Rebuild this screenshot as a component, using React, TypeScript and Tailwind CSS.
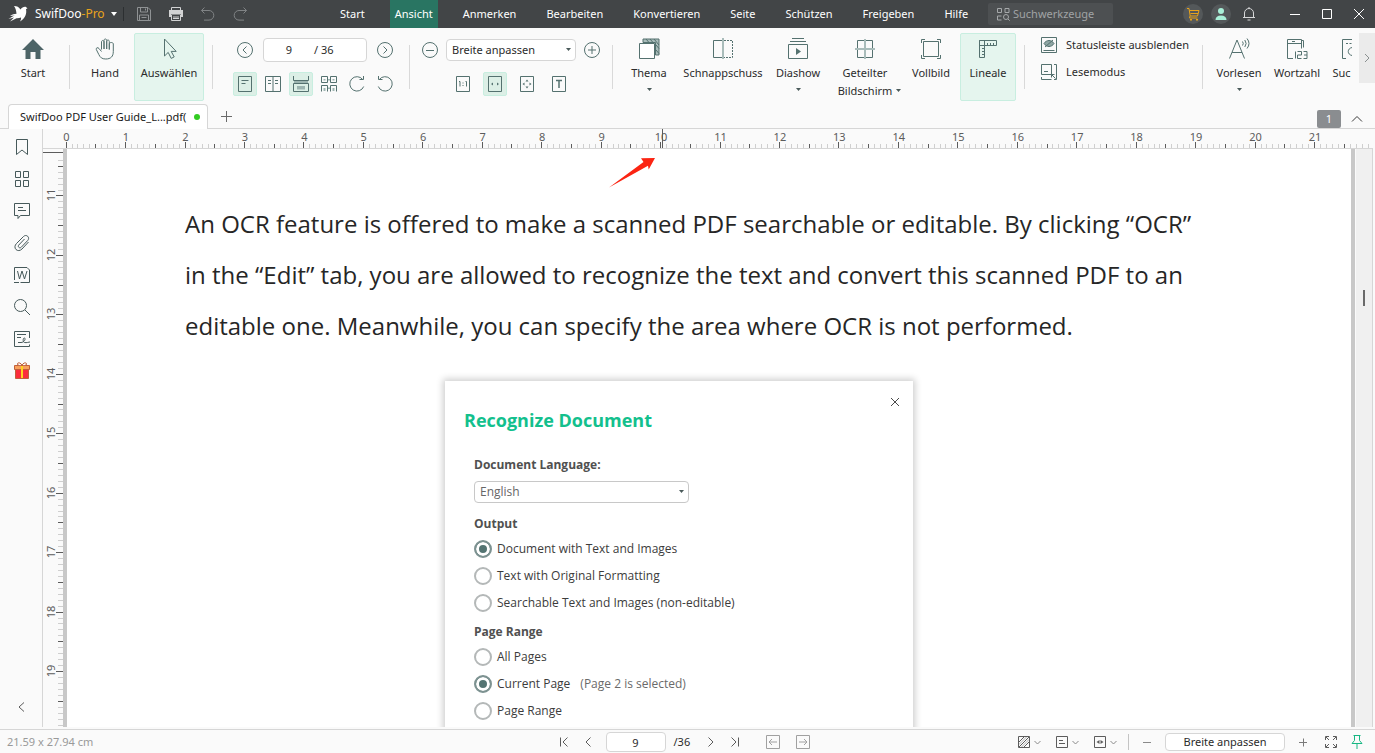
import { useState, type ReactNode } from "react";

const MENU = [
  "Start",
  "Ansicht",
  "Anmerken",
  "Bearbeiten",
  "Konvertieren",
  "Seite",
  "Schützen",
  "Freigeben",
  "Hilfe",
];

const INK = "#54716f";
const CM = 59.45;

type IconProps = {
  size?: number;
  color?: string;
  children: ReactNode;
};

function Icon({ size = 24, color = INK, children }: IconProps) {
  return (
    <svg
      width={size}
      height={size}
      viewBox={`0 0 ${size} ${size}`}
      fill="none"
      stroke={color}
      className="block shrink-0"
      aria-hidden="true"
    >
      {children}
    </svg>
  );
}

function Caret() {
  return (
    <svg width="5" height="3" viewBox="0 0 5 3" className="block" aria-hidden="true">
      <path d="M0 0h5L2.5 3z" fill="#4a5a5a" />
    </svg>
  );
}

type RibbonButtonProps = {
  label: string;
  width: string;
  icon: ReactNode;
  active?: boolean;
  caret?: boolean;
};

function RibbonButton({ label, width, icon, active, caret }: RibbonButtonProps) {
  return (
    <button
      className={`flex h-[68px] shrink-0 flex-col items-center rounded-xs border pt-[3px] ${width} ${
        active ? "border-[#c8eee0] bg-[#e5f5ee]" : "border-transparent"
      }`}
    >
      <span className="flex h-6 items-center">{icon}</span>
      <span className="mt-[3px] leading-[18px] whitespace-nowrap">{label}</span>
      {caret && (
        <span className="mt-1.5">
          <Caret />
        </span>
      )}
    </button>
  );
}

function SmallButton({ label, active, children }: { label: string; active?: boolean; children: ReactNode }) {
  return (
    <button
      aria-label={label}
      className={`flex size-6 shrink-0 items-center justify-center rounded-xs border ${
        active ? "border-[#c8eee0] bg-[#dcefe6]" : "border-transparent"
      }`}
    >
      {children}
    </button>
  );
}

function Divider() {
  return <span className="mt-3 h-11 w-px shrink-0 bg-[#d9d9d9]" />;
}

function TitleBar() {
  return (
    <header className="flex h-7 shrink-0 items-center bg-[#424547] text-white">
      <div className="flex w-[335px] shrink-0 items-center pl-2">
        <svg width="20" height="18" viewBox="0 0 20 18" className="shrink-0" aria-hidden="true">
          <path
            d="M6 1c3 0 5 1 6.500 3.500 1.500-2 3.500-3 5.500-2.500l1.500 1.500-1.500.5c1 5-1 9.500-6 12.500 1-1.800 1.200-3 1-4-1.500.6-3 .8-4.500.7l-6.500 3.300 4-4-5.500 1.500c2-1.500 4.500-3 6.500-3.500l-5 .5c2-1.500 4.500-2.200 6.500-2.200-.2-3-.8-5.300-2.500-7.800z"
            fill="#fff"
          />
        </svg>
        <button className="ml-[7px] flex w-[82px] items-center justify-between text-xs whitespace-nowrap">
          <span>
            SwifDoo<span className="text-[#e8a31b]">-Pro</span>
          </span>
          <svg width="6" height="4" viewBox="0 0 6 4" aria-hidden="true">
            <path d="M0 0h6L3 4z" fill="#fff" />
          </svg>
        </button>
        <span className="ml-1.5 h-3.5 w-px bg-[#2c2f31]" />
        <div className="ml-2 flex gap-2">
          <button aria-label="Speichern" className="flex size-6 items-center justify-center">
            <Icon size={16} color="#8f9294">
              <path d="M1.500 1.500h10.500l2.500 2.500v10.500h-13zM4.500 1.500v4.500h7v-4.500M9.500 2.500v2M3.500 14.500v-5.500h9v5.500M5.500 11.500h5" />
            </Icon>
          </button>
          <button aria-label="Drucken" className="flex size-6 items-center justify-center">
            <Icon size={16} color="#d2d3d4">
              <path d="M3.500 4v-2.500h9v2.500" />
              <path d="M1 4h14v7h-2v-2.500h-10v2.500h-2z" fill="#d2d3d4" stroke="none" />
              <path d="M3.500 9v5.500h9v-5.500M5 11h6M5 12.500h6" />
            </Icon>
          </button>
          <button aria-label="Rückgängig" className="flex size-6 items-center justify-center">
            <Icon size={16} color="#808385">
              <path d="M4.500 1.500l-3 3 3 3M1.500 4.500h7.500a4.800 4.800 0 0 1 0 9.600h-5" />
            </Icon>
          </button>
          <button aria-label="Wiederholen" className="flex size-6 items-center justify-center">
            <Icon size={16} color="#808385">
              <path d="M11.500 1.500l3 3-3 3M14.500 4.500h-7.500a4.800 4.800 0 0 0 0 9.600h5" />
            </Icon>
          </button>
        </div>
      </div>
      <nav className="flex h-full gap-5 text-[11px]">
        {MENU.map((item) => (
          <button
            key={item}
            className={`h-full px-[5px] whitespace-nowrap ${item === "Ansicht" ? "bg-[#297562]" : ""}`}
          >
            {item}
          </button>
        ))}
      </nav>
      <label className="ml-auto flex h-[22px] w-[125px] shrink-0 items-center rounded-xs bg-[#4d5052] pl-[9px]">
        <Icon size={13} color="#a5a8aa">
          <path d="M.5 .5h4v4h-4zM8 .5h4v4h-4zM4.500 8h-4v4h4" />
          <circle cx="9" cy="9" r="2.500" />
          <path d="M11 11l1.700 1.700" />
        </Icon>
        <input
          aria-label="Suche"
          placeholder="Suchwerkzeuge"
          className="ml-[3px] w-full min-w-0 text-[11px] outline-none placeholder:text-[#a0a3a5]"
        />
      </label>
      <div className="ml-[70px] flex shrink-0 gap-2">
        <button aria-label="Warenkorb" className="flex size-5 items-center justify-center rounded-full bg-[#54585a]">
          <Icon size={14} color="#e8a31b">
            <path d="M1 1.500h2l1.200 7.500h7.300l1.500-5.500h-9.500M4.500 6.500h7.500M4 9l-.5 2h8" />
            <path d="M4 12h2v1.500h-2zM10 12h2v1.500h-2z" fill="#e8a31b" stroke="none" />
          </Icon>
        </button>
        <button aria-label="Konto" className="flex size-5 items-center justify-center rounded-full bg-[#54585a]">
          <Icon size={12}>
            <circle cx="6" cy="3" r="3" fill="#a9f0d8" stroke="none" />
            <path d="M.5 12c0-3 2-4.500 5.500-4.500s5.500 1.500 5.500 4.500z" fill="#a9f0d8" stroke="none" />
          </Icon>
        </button>
        <button aria-label="Benachrichtigungen" className="flex size-5 items-center justify-center">
          <Icon size={14} color="#d6d7d8">
            <path d="M1 10.500h12M2.500 10.500v-4.500a4.500 4.500 0 0 1 9 0v4.500M7 1.500v-1.500M5.500 13h3" />
          </Icon>
        </button>
      </div>
      <div className="ml-[20px] flex shrink-0">
        <button aria-label="Minimieren" className="flex h-7 w-8 items-center justify-center">
          <Icon size={12} color="#fff">
            <path d="M1 6.500h10" />
          </Icon>
        </button>
        <button aria-label="Maximieren" className="flex h-7 w-8 items-center justify-center">
          <Icon size={12} color="#fff">
            <path d="M1.500 1.500h9v9h-9z" />
          </Icon>
        </button>
        <button aria-label="Schließen" className="flex h-7 w-8 items-center justify-center">
          <Icon size={12} color="#fff">
            <path d="M1 1l10 10M11 1l-10 10" />
          </Icon>
        </button>
      </div>
    </header>
  );
}

function PageNav() {
  return (
    <div className="ml-5 flex w-[164px] shrink-0 flex-col gap-2.5 pt-[5px]">
      <div className="flex items-center justify-between">
        <SmallButton label="Vorherige Seite">
          <Icon size={18}>
            <circle cx="9" cy="9" r="7.500" />
            <path d="M10.500 5.500l-3.500 3.500 3.500 3.500" />
          </Icon>
        </SmallButton>
        <label className="flex h-6 w-[104px] items-center rounded border border-[#d6d6d6] bg-white">
          <input
            aria-label="Seite"
            defaultValue="9"
            className="w-[50px] text-center outline-none"
          />
          <span className="whitespace-pre">/ 36</span>
        </label>
        <SmallButton label="Nächste Seite">
          <Icon size={18}>
            <circle cx="9" cy="9" r="7.500" />
            <path d="M7.500 5.500l3.500 3.500-3.500 3.500" />
          </Icon>
        </SmallButton>
      </div>
      <div className="flex gap-1">
        <SmallButton label="Einzelseite" active>
          <Icon size={16}>
            <path d="M1.500 .5h13v15h-13zM4.500 4.500h7M4.500 7.500h4" />
          </Icon>
        </SmallButton>
        <SmallButton label="Doppelseite">
          <Icon size={16}>
            <path d="M.5 .5h15v15h-15zM8 .5v15" />
            <path d="M3 4.500h3M3 7.500h3M10 4.500h3M10 7.500h3" />
          </Icon>
        </SmallButton>
        <SmallButton label="Fortlaufend" active>
          <Icon size={16}>
            <path d="M.5 0v4.500h15v-4.500M.5 15.500v-8h15v8z" />
            <path d="M1 5h14v2h-14zM4 10h8v3.500h-8z" fill="#9db5b1" stroke="none" />
          </Icon>
        </SmallButton>
        <SmallButton label="Doppelseite fortlaufend">
          <Icon size={18}>
            <path d="M1.500 1.500h6v6h-6zM10.500 1.500h6v6h-6zM1.500 16.500v-6h6v6M10.500 16.500v-6h6v6" />
            <path d="M8 4h2v1.500h-2zM8 12.500h2v1.500h-2zM3.500 4h2v1.500h-2zM12.500 4h2v1.500h-2zM3.500 13h2v3h-2zM12.500 13h2v3h-2z" fill="#9db5b1" stroke="none" />
          </Icon>
        </SmallButton>
        <SmallButton label="Im Uhrzeigersinn drehen">
          <Icon size={18}>
            <path d="M14.700 4.500a7.200 7.200 0 1 0 1 7M11.500 4.500h4v-3.500" />
          </Icon>
        </SmallButton>
        <SmallButton label="Gegen Uhrzeigersinn drehen">
          <Icon size={18}>
            <path d="M3.300 4.500a7.200 7.200 0 1 1-1 7M6.500 4.500h-4v-3.500" />
          </Icon>
        </SmallButton>
      </div>
    </div>
  );
}

function ZoomTools() {
  return (
    <div className="ml-2 flex w-[186px] shrink-0 flex-col gap-2.5 pt-[5px]">
      <div className="flex items-center gap-1">
        <SmallButton label="Verkleinern">
          <Icon size={18}>
            <circle cx="9" cy="9" r="7.500" />
            <path d="M5 9.500h8" />
          </Icon>
        </SmallButton>
        <div className="relative">
          <select
            aria-label="Zoom"
            className="block h-[22px] w-[130px] appearance-none rounded border border-[#d6d6d6] bg-white pl-[5px] outline-none"
          >
            <option>Breite anpassen</option>
          </select>
          <span className="pointer-events-none absolute top-[9px] right-[5px]">
            <Caret />
          </span>
        </div>
        <SmallButton label="Vergrößern">
          <Icon size={18}>
            <circle cx="9" cy="9" r="7.500" />
            <path d="M5 9h8M9 5v8" />
          </Icon>
        </SmallButton>
      </div>
      <div className="flex justify-center gap-2">
        <SmallButton label="Originalgröße">
          <Icon size={16}>
            <path d="M1.500 .5h13v15h-13z" />
            <path d="M4 5.500h1v5M10.500 5.500h1v5M8 6.500v1M8 9v1" />
          </Icon>
        </SmallButton>
        <SmallButton label="Breite anpassen" active>
          <Icon size={16}>
            <path d="M1.500 .5h13v15h-13z" />
            <path d="M6 6.500v3l-2-1.500zM10 6.500v3l2-1.500z" fill={INK} stroke="none" />
          </Icon>
        </SmallButton>
        <SmallButton label="Seite anpassen">
          <Icon size={16}>
            <path d="M1.500 .5h13v15h-13z" />
            <path d="M5.500 6.500v3l-2-1.500zM10.500 6.500v3l2-1.500zM6.500 5.500h3l-1.500-2zM6.500 10.500h3l-1.500 2z" fill={INK} stroke="none" />
          </Icon>
        </SmallButton>
        <SmallButton label="Text anpassen">
          <Icon size={16}>
            <path d="M1.500 .5h13v15h-13z" />
            <path d="M5 4.500h6M8 4.500v7.500" strokeWidth="1.500" />
          </Icon>
        </SmallButton>
      </div>
    </div>
  );
}

function Ribbon() {
  return (
    <section className="flex h-[76px] shrink-0 overflow-hidden pt-[5px] pl-2 text-[11px] text-[#2b2b2b]">
      <RibbonButton
        label="Start"
        width="w-[50px]"
        icon={
          <Icon>
            <path d="M12 2l11 11h-3.500v9h-5v-7h-5v7h-5v-9h-3.500z" fill="#4d6467" stroke="none" />
          </Icon>
        }
      />
      <span className="ml-[11px] flex"><Divider /></span>
      <div className="ml-2.5 flex gap-1">
        <RibbonButton
          label="Hand"
          width="w-[50px]"
          icon={
            <Icon>
              <path d="M8.500 12.500v-7.500c0-2 2.500-2 2.500 0v7-8.500c0-2 2.700-2 2.700 0v8.500-7.500c0-2 2.600-2 2.600 0v8-5.500c0-2 4-2 4 0v7.500c0 5-2.500 7.500-7.500 7.500-4 0-5.500-1.500-7-4.500l-2.500-5c-.5-1.800 1.500-2.500 2.700-1l2.500 3" />
            </Icon>
          }
        />
        <RibbonButton
          label="Auswählen"
          width="w-[70px]"
          active
          icon={
            <Icon>
              <path d="M7.500 2v17l3.700-3.600 3 6 3-1.500-3-5.500h5z" />
            </Icon>
          }
        />
      </div>
      <span className="ml-2 flex"><Divider /></span>
      <PageNav />
      <span className="ml-3 flex"><Divider /></span>
      <ZoomTools />
      <span className="ml-2 flex"><Divider /></span>
      <div className="ml-[11px] flex">
        <RibbonButton
          label="Thema"
          width="w-[50px]"
          caret
          icon={
            <Icon>
              <path d="M6 2h16v16h-3.500v-12.500h-12.500z" fill="#a9bcba" />
              <path d="M9 2l3 3.500M13 2l3 3.500M17 2l5 6M19 8l3 3.500M19 13l3 3.500" />
              <path d="M2.500 6.500h15v15h-15z" fill="#fff" />
            </Icon>
          }
        />
        <RibbonButton
          label="Schnappschuss"
          width="w-[98px]"
          icon={
            <Icon>
              <path d="M12 3.500h-9.500v17h9.500" />
              <path d="M13 3.500h8.500v17h-8.500" strokeDasharray="2 1" />
              <path d="M11 1h2v21h-2z" fill="#a9bcba" stroke="none" />
            </Icon>
          }
        />
        <RibbonButton
          label="Diashow"
          width="w-[52px]"
          caret
          icon={
            <Icon>
              <path d="M6 1.500h12M4 4.500h16M2.500 7.500h19v14h-19z" />
              <path d="M10 11v7l5-3.500z" fill={INK} stroke="none" />
            </Icon>
          }
        />
        <button className="ml-2 flex h-[68px] w-[66px] shrink-0 flex-col items-center pt-1">
          <Icon>
            <path d="M4.500 3.500h15v17h-15z" />
            <path d="M11 2h2v20h-2zM2 11h20v2h-20z" fill="#a9bcba" stroke="none" />
          </Icon>
          <span className="mt-[3px] leading-[18px]">Geteilter</span>
          <span className="relative leading-[18px]">
            Bildschirm
            <span className="absolute top-[7px] left-full ml-1">
              <Caret />
            </span>
          </span>
        </button>
        <RibbonButton
          label="Vollbild"
          width="ml-2 w-[50px]"
          icon={
            <Icon>
              <path d="M4.500 4.500h15v15h-15zM2.500 6v-3.500h3.500M18 2.500h3.500v3.500M21.500 18v3.500h-3.500M6 21.500h-3.500v-3.500" />
            </Icon>
          }
        />
        <RibbonButton
          label="Lineale"
          width="ml-1 w-14"
          active
          icon={
            <Icon>
              <path d="M3.500 3.500h17v5h-17zM3.500 3.500h5v17h-5z" />
              <path d="M11.500 8v-2M14.500 8v-2M17.500 8v-2M8 11.500h-2M8 14.500h-2M8 17.500h-2" />
            </Icon>
          }
        />
      </div>
      <span className="ml-2 flex"><Divider /></span>
      <div className="ml-3 flex w-[154px] shrink-0 flex-col gap-[3px]">
        <button className="flex h-6 items-center gap-[5px] whitespace-nowrap">
          <Icon>
            <path d="M4.500 4.500h15v15h-15zM6.500 17.500h11" />
            <path d="M7 10.500c2.500-4 7.500-4 10 0-2.500 4-7.500 4-10 0z" fill="#8fa6a4" />
            <path d="M8 14l8-7" />
          </Icon>
          Statusleiste ausblenden
        </button>
        <button className="flex h-6 items-center gap-[5px] whitespace-nowrap">
          <Icon>
            <path d="M4.500 4.500h10v10h-10zM7 11.500h4M4.500 17v2.500h10M17 4.500h2.500v15h-2.500M18.500 18.500l-4-4M14.500 17.500v-3h3" />
          </Icon>
          Lesemodus
        </button>
      </div>
      <span className="ml-[11px] flex"><Divider /></span>
      <div className="ml-[9px] flex min-w-0 flex-1 overflow-hidden">
        <RibbonButton
          label="Vorlesen"
          width="w-[54px]"
          caret
          icon={
            <Icon>
              <path d="M2.500 21.500l7.500-18.500 7.500 18.500M5 15.500h10" />
              <path d="M15.500 4.500q1.500 2 0 4M17.800 3q2.700 3.500 0 7M20 1.500q4 5 0 10" />
            </Icon>
          }
        />
        <RibbonButton
          label="Wortzahl"
          width="w-[62px]"
          icon={
            <Icon>
              <path d="M8 21.500h-5.500v-19h14v9M2.500 6.500h14M16.500 3.500h2v7M7 4.500h3" />
              <path d="M10.500 14.500v7M12.500 14.500h4v3.500h-4v3.500h4M18.500 14.500h3.500v7h-3.500M19 18h3" />
            </Icon>
          }
        />
        <button aria-label="Suchen" className="ml-1 flex h-[68px] w-[19px] shrink-0 flex-col pt-1">
          <span className="ml-2.5 block w-[10px] overflow-hidden">
            <Icon>
              <path d="M4 21.500h-3.500v-19h20" />
              <path d="M4 6.500h2M7.500 6.500h2" />
              <path d="M10 10.500c-5 1-5 7 0 8" />
            </Icon>
          </span>
          <span className="mt-[3px] leading-[18px]">Suc</span>
        </button>
      </div>
      <button aria-label="Mehr" className="ml-auto flex h-[50px] w-4 shrink-0 items-center justify-center bg-[#ebebeb]">
        <Icon size={10} color="#8a9090">
          <path d="M3 1l4 4-4 4" />
        </Icon>
      </button>
    </section>
  );
}

function TabStrip() {
  return (
    <div className="flex h-[25px] shrink-0 items-end border-b border-[#d6d6d6] pl-2 text-[11px]">
      <button className="-mb-px flex h-[25px] w-[200px] items-center justify-between rounded-t border border-b-0 border-[#d6d6d6] bg-white pr-[7px] pl-[11px] whitespace-nowrap text-[#1a1a1a]">
        SwifDoo PDF User Guide_L...pdf(
        <span className="size-1.5 shrink-0 rounded-full bg-[#33cc22]" />
      </button>
      <button aria-label="Neuer Tab" className="flex h-6 w-9 items-center justify-center">
        <Icon size={12} color="#6a6a6a">
          <path d="M6.500 1v11M1 6.500h11" />
        </Icon>
      </button>
      <button className="mr-1 ml-auto h-[18px] w-6 rounded-xs bg-[#8a8d90] leading-4 text-white">1</button>
      <button aria-label="Menüband einklappen" className="mr-1.5 flex h-[18px] w-6 items-center justify-center">
        <Icon size={12} color="#3a3a3a">
          <path d="M1 8.500l5-5 5 5" />
        </Icon>
      </button>
    </div>
  );
}

const SIDE_ICONS = [
  {
    label: "Lesezeichen",
    icon: <path d="M3.500 1.500h11v15l-5.500-4.500-5.500 4.500z" />,
  },
  {
    label: "Miniaturansichten",
    icon: <path d="M2.500 1.500h5v6h-5zM10.500 1.500h5v6h-5zM2.500 10.500h5v6h-5zM10.500 10.500h5v6h-5z" />,
  },
  {
    label: "Kommentare",
    icon: <path d="M1.500 1.500h15v12h-9l-2.500 3v-3h-3.500zM5 5.500h5M5 8.500h8" />,
  },
  {
    label: "Anhänge",
    icon: (
      <path d="M15.500 8l-6.500 7c-2 2-4.500 2-6 .5s-1.500-4 .5-6l7-7c1.300-1.300 3-1.300 4.200-.2s1.200 3 0 4.200l-6.500 6.800c-.7.700-1.700.7-2.400 0s-.6-1.600 0-2.300l5.700-6" />
    ),
  },
  {
    label: "Word",
    icon: <path d="M1.500 14v-12.500h12.500l2.500 2.500v12.500h-9M1 16.500h5M4.500 5l2 8 2.500-8 2.500 8 2.500-8" />,
  },
  {
    label: "Suchen",
    icon: (
      <>
        <circle cx="7.500" cy="7.500" r="6" />
        <path d="M12 12l5 5" />
      </>
    ),
  },
  {
    label: "Signaturen",
    icon: (
      <path d="M16.500 8v-6.500h-15v15h15v-2M4 4.500h9M4 7.500h4M8 12.500c3.500 0 5-4 3.500-4.500s-2 4 0 4.500 4.500-.5 5.500-.5M5 12.500h3" />
    ),
  },
];

function Sidebar() {
  return (
    <aside className="flex w-[43px] shrink-0 flex-col items-center border-r border-[#d6d6d6] pt-0.5 pl-0.5">
      {SIDE_ICONS.map(({ label, icon }) => (
        <button key={label} aria-label={label} className="flex size-8 items-center justify-center">
          <Icon size={18} color="#46595a">
            {icon}
          </Icon>
        </button>
      ))}
      <button aria-label="Geschenk" className="flex size-8 items-center justify-center">
        <Icon size={18} color="#c0603a">
          <path d="M2.500 7h13v9.500h-13z" fill="#fb2c3c" />
          <path d="M1.500 3.500h15v4h-15z" fill="#f8a05c" />
          <path d="M9 3.500c-1-3-4.500-3.500-4.500-1.500s3 1.500 4.500 1.500 4.500.5 4.500-1.500-3.500-1.500-4.500 1.500z" fill="#fff" />
          <path d="M8 4h2v12h-2z" fill="#ffd21f" stroke="none" />
        </Icon>
      </button>
      <button aria-label="Leiste einklappen" className="mt-auto mb-2 flex size-6 items-center justify-center">
        <Icon size={12} color="#5a5a5a">
          <path d="M8 1.500l-5 4.500 5 4.500" />
        </Icon>
      </button>
    </aside>
  );
}

function HorizontalRuler() {
  const ticks = Array.from({ length: 220 }, (_, i) => i);
  return (
    <svg className="block h-[19px] w-full" aria-hidden="true">
      {ticks.map((i) => {
        const x = Math.round(2.6 + (i * CM) / 10) + 0.5;
        const dark = i % 5 === 0;
        return (
          <line key={i} x1={x} x2={x} y1={i % 10 === 0 ? 13 : 15} y2="19" stroke={dark ? "#5c5c5c" : "#cfcfcf"} />
        );
      })}
      {ticks
        .filter((i) => i % 10 === 0)
        .map((i) => (
          <text key={i} x={3.5 + (i * CM) / 10} y="12" textAnchor="middle" fontSize="11" fill="#5c5c5c">
            {i / 10}
          </text>
        ))}
      <line x1="599.500" x2="599.500" y1="0" y2="19" stroke="#5c5c5c" />
    </svg>
  );
}

function VerticalRuler() {
  // the first centimetre in view is 10.3
  const ticks = Array.from({ length: 96 }, (_, i) => i + 104);
  const top = (i: number) => Math.round((i * CM) / 10 - 607.5);
  return (
    <svg className="block h-full w-5 shrink-0" aria-hidden="true">
      <line x1="0" x2="20" y1="3.500" y2="3.500" stroke="#5c5c5c" />
      {ticks.map((i) => {
        const y = top(i) + 0.5;
        const dark = i % 5 === 0;
        return <line key={i} y1={y} y2={y} x1={i % 10 === 0 ? 13 : 15} x2="20" stroke={dark ? "#5c5c5c" : "#cfcfcf"} />;
      })}
      {ticks
        .filter((i) => i % 10 === 0)
        .map((i) => (
          <text
            key={i}
            transform={`translate(12 ${top(i)}) rotate(-90)`}
            textAnchor="middle"
            fontSize="11"
            fill="#5c5c5c"
          >
            {i / 10}
          </text>
        ))}
    </svg>
  );
}

type RadioRowProps = {
  name: string;
  label: string;
  note?: string;
  checked: boolean;
  onSelect: () => void;
};

function RadioRow({ name, label, note, checked, onSelect }: RadioRowProps) {
  return (
    <label className="flex h-[27px] items-center gap-[5px] text-[#3c3c3c]">
      <input
        type="radio"
        name={name}
        checked={checked}
        onChange={onSelect}
        className="size-[18px] appearance-none rounded-full border-2 border-[#b4b8b8] bg-white checked:border-[#7d9291] checked:bg-[#547472] checked:shadow-[inset_0_0_0_3px_#fff]"
      />
      {label}
      {note && <span className="ml-[5px] text-[#6a6a6a]">{note}</span>}
    </label>
  );
}

const OUTPUTS = [
  "Document with Text and Images",
  "Text with Original Formatting",
  "Searchable Text and Images (non-editable)",
];
const RANGES = ["All Pages", "Current Page", "Page Range"];

function RecognizeDialog() {
  const [output, setOutput] = useState(OUTPUTS[0]);
  const [range, setRange] = useState(RANGES[1]);

  return (
    <div className="relative mt-[30px] ml-[378px] h-[420px] w-[468px] bg-white px-[29px] pt-[25px] text-xs shadow-[0_0_7px_2px_rgba(0,0,0,0.2)]">
      <button aria-label="Close" className="absolute top-[9px] right-1.5 flex size-6 items-center justify-center">
        <Icon size={10} color="#4a4a4a">
          <path d="M1 1l8 8M9 1l-8 8" />
        </Icon>
      </button>
      <h2 className="-ml-2.5 text-lg leading-7 font-bold text-[#13c08d]">Recognize Document</h2>
      <label htmlFor="language" className="mt-5 block leading-[22px] font-bold text-[#505050]">
        Document Language:
      </label>
      <div className="relative mt-[5px] w-[215px]">
        <select
          id="language"
          className="block h-[22px] w-full appearance-none rounded border border-[#c8c8c8] bg-white pl-[5px] text-[#666] outline-none"
        >
          <option>English</option>
        </select>
        <span className="pointer-events-none absolute top-[9px] right-[5px]">
          <Caret />
        </span>
      </div>
      <h3 className="mt-2.5 leading-[22px] font-bold text-[#505050]">Output</h3>
      {OUTPUTS.map((item) => (
        <RadioRow key={item} name="output" label={item} checked={output === item} onSelect={() => setOutput(item)} />
      ))}
      <h3 className="mt-[5px] leading-[22px] font-bold text-[#505050]">Page Range</h3>
      {RANGES.map((item) => (
        <RadioRow
          key={item}
          name="range"
          label={item}
          note={item === "Current Page" ? "(Page 2 is selected)" : undefined}
          checked={range === item}
          onSelect={() => setRange(item)}
        />
      ))}
    </div>
  );
}

function DocumentView() {
  return (
    <div className="flex min-h-0 min-w-0 flex-1 flex-col">
      <div className="mr-[2px] border-b border-[#d6d6d6] pl-5">
        <HorizontalRuler />
      </div>
      <div className="flex min-h-0 flex-1">
        <VerticalRuler />
        <div className="relative min-w-0 flex-1 overflow-hidden border-x-4 border-[#c8c8c8] bg-white font-['Open_Sans',sans-serif]">
          <svg
            width="48"
            height="32"
            viewBox="0 0 48 32"
            className="absolute top-2 left-[541px]"
            aria-hidden="true"
          >
            <path d="M1 30.500L35.500 5 33 1.300 47 1 40.700 12.500 40 8.800z" fill="#fb2412" />
          </svg>
          <p className="mt-[49px] pl-[118px] text-2xl leading-[51px] text-[#262626]">
            <span className="block whitespace-nowrap">
              An OCR feature is offered to make a scanned PDF searchable or editable. By clicking “OCR”
            </span>
            <span className="block whitespace-nowrap">
              in the “Edit” tab, you are allowed to recognize the text and convert this scanned PDF to an
            </span>
            <span className="block whitespace-nowrap">
              editable one. Meanwhile, you can specify the area where OCR is not performed.
            </span>
          </p>
          <RecognizeDialog />
        </div>
        <div className="mr-[2px] ml-px flex w-[17px] shrink-0 justify-center border-r border-[#d6d6d6] bg-[#f0f0f0] pt-[141px]">
          <span className="h-4 w-0.5 bg-[#6a6a6a]" />
        </div>
      </div>
    </div>
  );
}

function StatusButton({ label, children }: { label: string; children: ReactNode }) {
  return (
    <button aria-label={label} className="flex size-6 shrink-0 items-center justify-center">
      {children}
    </button>
  );
}

function StatusDropdown({ label, children }: { label: string; children: ReactNode }) {
  return (
    <button aria-label={label} className="flex h-6 w-[30px] shrink-0 items-center gap-0.5">
      <Icon size={16} color="#5c5c5c">
        {children}
      </Icon>
      <Icon size={7} color="#8a8a8a">
        <path d="M.5 2l3 3 3-3" />
      </Icon>
    </button>
  );
}

function StatusBar() {
  return (
    <footer className="grid h-6 shrink-0 grid-cols-[1fr_auto_1fr] items-center border-t border-[#d6d6d6] text-[11px] text-[#2b2b2b]">
      <span className="pl-[7px] text-[#999]">21.59 x 27.94 cm</span>
      <div className="flex items-center pr-[9px]">
        <StatusButton label="Erste Seite">
          <Icon size={10} color="#5c5c5c">
            <path d="M1.500 .5v9M8.500 .5l-4.500 4.500 4.500 4.500" />
          </Icon>
        </StatusButton>
        <StatusButton label="Zurück">
          <Icon size={10} color="#5c5c5c">
            <path d="M7.500 .5l-4.500 4.500 4.500 4.500" />
          </Icon>
        </StatusButton>
        <input
          aria-label="Seitenzahl"
          defaultValue="9"
          className="ml-1.5 h-5 w-[60px] rounded border border-[#d6d6d6] bg-white text-center outline-none"
        />
        <span className="ml-2 w-[17px]">/36</span>
        <span className="w-2" />
        <StatusButton label="Weiter">
          <Icon size={10} color="#5c5c5c">
            <path d="M2.500 .5l4.500 4.500-4.500 4.500" />
          </Icon>
        </StatusButton>
        <StatusButton label="Letzte Seite">
          <Icon size={10} color="#5c5c5c">
            <path d="M1.500 .5l4.500 4.500-4.500 4.500M8.500 .5v9" />
          </Icon>
        </StatusButton>
        <div className="ml-3.5 flex gap-1.5">
          <StatusButton label="Vorherige Ansicht">
            <Icon size={14} color="#a0a0a0">
              <path d="M.5 .5h13v13h-13zM3 7h8M6 4l-3 3 3 3" />
            </Icon>
          </StatusButton>
          <StatusButton label="Nächste Ansicht">
            <Icon size={14} color="#a0a0a0">
              <path d="M.5 .5h13v13h-13zM3 7h8M8 4l3 3-3 3" />
            </Icon>
          </StatusButton>
        </div>
      </div>
      <div className="flex items-center justify-end pr-1.5">
        <div className="flex gap-2">
          <StatusDropdown label="Hintergrund">
            <path d="M3 8l5-5M3 13l10-10M8 13l5-5" />
            <path d="M3 10.500l7.500-7.500M5.500 13l7.500-7.500" stroke="#b0b0b0" />
            <path d="M2.500 2.500h11v11h-11z" />
          </StatusDropdown>
          <StatusDropdown label="Seitenlayout">
            <path d="M2.500 2.500h11v11h-11zM5 6.500h4M5 9.500h6" />
          </StatusDropdown>
          <StatusDropdown label="Anpassung">
            <path d="M2.500 2.500h11v11h-11z" />
            <path d="M7.500 6v4l-3-2zM8.500 6v4l3-2z" fill="#5c5c5c" stroke="none" />
          </StatusDropdown>
        </div>
        <span className="mr-1.5 ml-1.5 h-4 w-px bg-[#c4c4c4]" />
        <StatusButton label="Verkleinern">
          <Icon size={10} color="#8a8a8a">
            <path d="M1 5.500h8" />
          </Icon>
        </StatusButton>
        <button className="mx-1.5 h-[18px] w-[120px] rounded border border-[#d6d6d6] bg-white leading-4">
          Breite anpassen
        </button>
        <StatusButton label="Vergrößern">
          <Icon size={10} color="#7a7a7a">
            <path d="M1 5.500h8M5.500 1.500v8" />
          </Icon>
        </StatusButton>
        <div className="ml-1 flex gap-0.5">
          <StatusButton label="Vollbild">
            <Icon size={14} color="#5c5c5c">
              <path d="M1.500 5v-3.500h3.500M9 1.500h3.500v3.500M12.500 9v3.500h-3.500M5 12.500h-3.500v-3.500M2 2l3 3M12 2l-3 3M12 12l-3-3M2 12l3-3" />
            </Icon>
          </StatusButton>
          <StatusButton label="Anheften">
            <Icon size={14} color="#16b783">
              <path d="M3.500 .5h7M4.500 .5v5l-2.500 3h10l-2.500-3v-5M7 8.500v5.500" />
            </Icon>
          </StatusButton>
        </div>
      </div>
    </footer>
  );
}

export default function App() {
  return (
    <div className="flex h-screen flex-col overflow-hidden bg-[#fafafa] font-['Noto_Sans','Open_Sans',sans-serif]">
      <TitleBar />
      <Ribbon />
      <TabStrip />
      <main className="flex min-h-0 flex-1 pb-0.5">
        <Sidebar />
        <DocumentView />
      </main>
      <StatusBar />
    </div>
  );
}
